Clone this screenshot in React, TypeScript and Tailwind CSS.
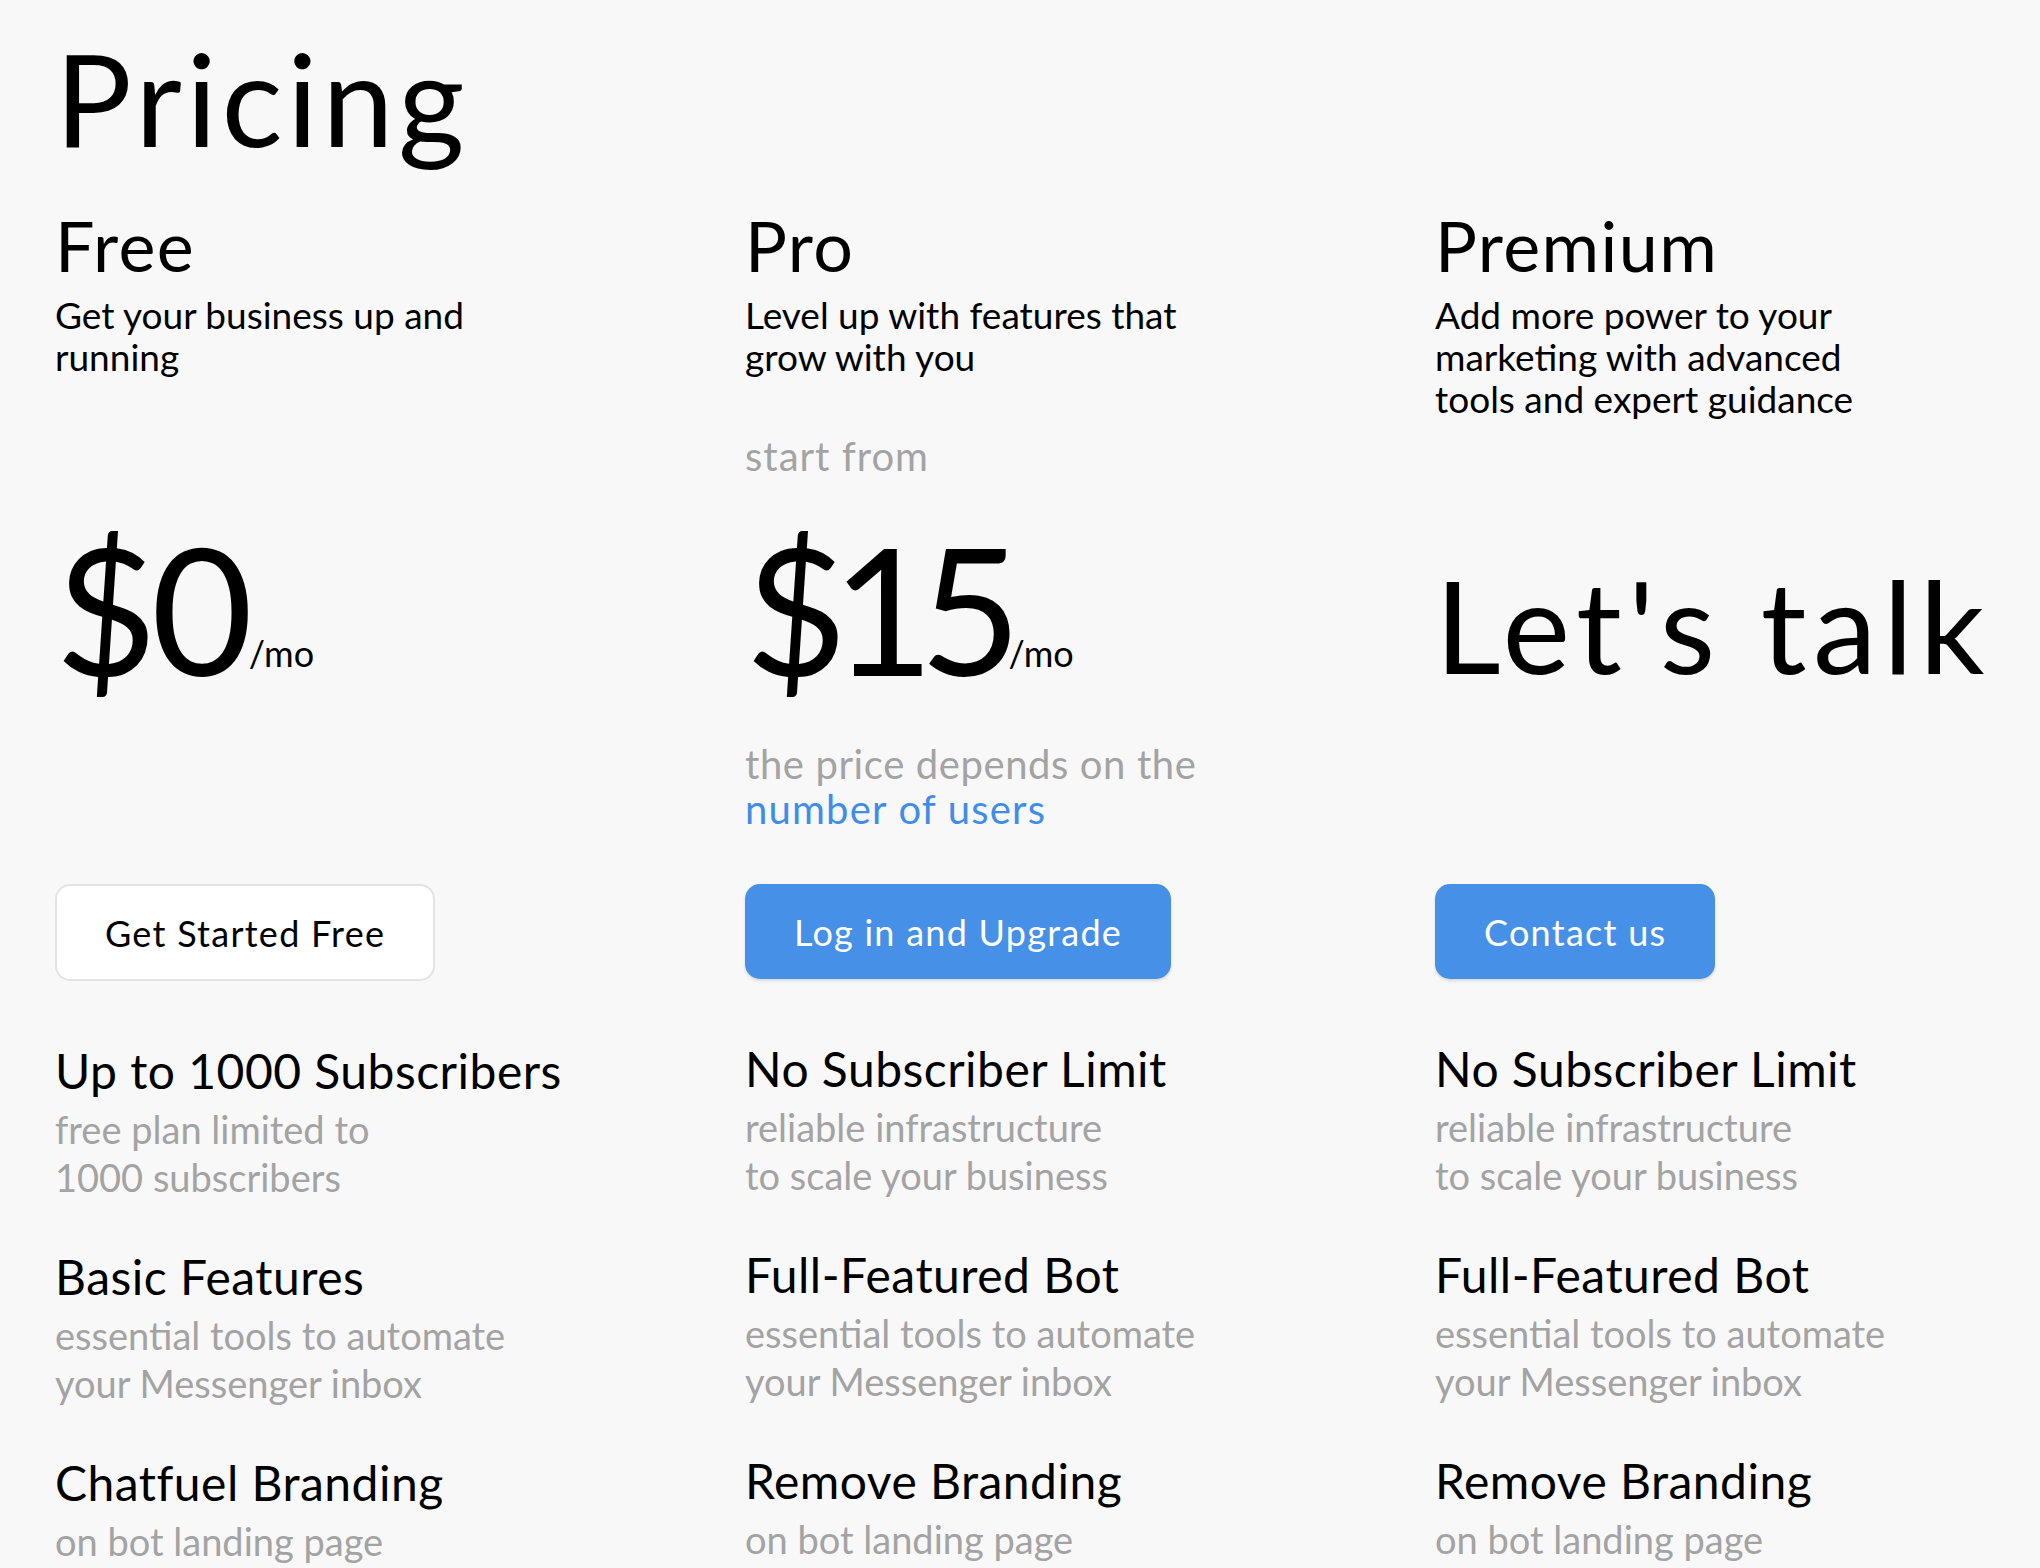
import React from 'react';

type Feature = { title: string; lines: string[] };

type Plan = {
  name: string;
  desc: string[];
  startFrom?: string;
  price?: string;
  priceClass?: string;
  talk?: string;
  note?: boolean;
  button: string;
  primary: boolean;
  features: Feature[];
};

const plans: Plan[] = [
  {
    name: 'Free',
    desc: ['Get your business up and', 'running'],
    price: '$0',
    priceClass: 'tracking-[-0.035em]',
    button: 'Get Started Free',
    primary: false,
    features: [
      { title: 'Up to 1000 Subscribers', lines: ['free plan limited to', '1000 subscribers'] },
      { title: 'Basic Features', lines: ['essential tools to automate', 'your Messenger inbox'] },
      { title: 'Chatfuel Branding', lines: ['on bot landing page'] },
    ],
  },
  {
    name: 'Pro',
    desc: ['Level up with features that', 'grow with you'],
    startFrom: 'start from',
    price: '$15',
    priceClass: 'tracking-[-0.085em]',
    note: true,
    button: 'Log in and Upgrade',
    primary: true,
    features: [
      { title: 'No Subscriber Limit', lines: ['reliable infrastructure', 'to scale your business'] },
      { title: 'Full-Featured Bot', lines: ['essential tools to automate', 'your Messenger inbox'] },
      { title: 'Remove Branding', lines: ['on bot landing page'] },
    ],
  },
  {
    name: 'Premium',
    desc: ['Add more power to your', 'marketing with advanced', 'tools and expert guidance'],
    talk: "Let's talk",
    button: 'Contact us',
    primary: true,
    features: [
      { title: 'No Subscriber Limit', lines: ['reliable infrastructure', 'to scale your business'] },
      { title: 'Full-Featured Bot', lines: ['essential tools to automate', 'your Messenger inbox'] },
      { title: 'Remove Branding', lines: ['on bot landing page'] },
    ],
  },
];

function PlanColumn({ plan }: { plan: Plan }) {
  return (
    <div className="w-[690px] shrink-0 flex flex-col">
      {/* name + description */}
      <div className="h-[224px]">
        <div className="text-[70px] leading-[70px] tracking-[0.02em]">{plan.name}</div>
        <div className="mt-[14px] text-[37px] leading-[42px]">
          {plan.desc.map((line) => (
            <div key={line}>{line}</div>
          ))}
        </div>
      </div>

      <div className="h-[44px] text-[40px] leading-[44px] tracking-[0.025em] text-[#a3a3a3]">{plan.startFrom}</div>

      {/* price */}
      <div className="mt-[40px] h-[180px] whitespace-nowrap">
        {plan.price && (
          <div className="leading-[180px]">
            <span className={`text-[176px] ${plan.priceClass}`}>{plan.price}</span>
            <span className="text-[36px] align-[9px] ml-[2px]">/mo</span>
          </div>
        )}
        {plan.talk && (
          <div className="pt-[43px] text-[128px] leading-[128px] tracking-[0.05em]">{plan.talk}</div>
        )}
      </div>

      <div className="mt-[44px] h-[90px] text-[40px] leading-[45px] tracking-[0.015em]">
        {plan.note && (
          <>
            <div className="text-[#a3a3a3]">the price depends on the</div>
            <div className="text-[#3f8de9] tracking-[0.03em]">number of users</div>
          </>
        )}
      </div>

      <div className="mt-[52px] flex">
        {plan.primary ? (
          <button className="h-[95px] px-[49px] rounded-[15px] bg-[#4790e8] text-white text-[36px] tracking-[0.035em] shadow-[0_2px_3px_rgba(0,0,0,0.12)]">
            {plan.button}
          </button>
        ) : (
          <button className="h-[97px] px-[48px] rounded-[15px] bg-white border-2 border-[#e3e3e3] text-black text-[36px] tracking-[0.035em]">
            {plan.button}
          </button>
        )}
      </div>

      {/* features */}
      <div className="mt-[62px] flex flex-col gap-[48px]">
        {plan.features.map((f) => (
          <div key={f.title}>
            <div className="text-[48px] leading-[56px] tracking-[0.01em]">{f.title}</div>
            <div className="mt-[6px] text-[38px] leading-[48px] text-[#a3a3a3]">
              {f.lines.map((l) => (
                <div key={l}>{l}</div>
              ))}
            </div>
          </div>
        ))}
      </div>
    </div>
  );
}

export default function App() {
  return (
    <div className="w-full h-[1568px] overflow-hidden bg-[#f8f8f8] text-black font-['Lato',sans-serif] pl-[55px]">
      <h1 className="pt-[34px] text-[128px] leading-[128px] tracking-[0.035em]">Pricing</h1>
      <div className="mt-[48px] flex">
        {plans.map((p) => (
          <PlanColumn key={p.name} plan={p} />
        ))}
      </div>
    </div>
  );
}
